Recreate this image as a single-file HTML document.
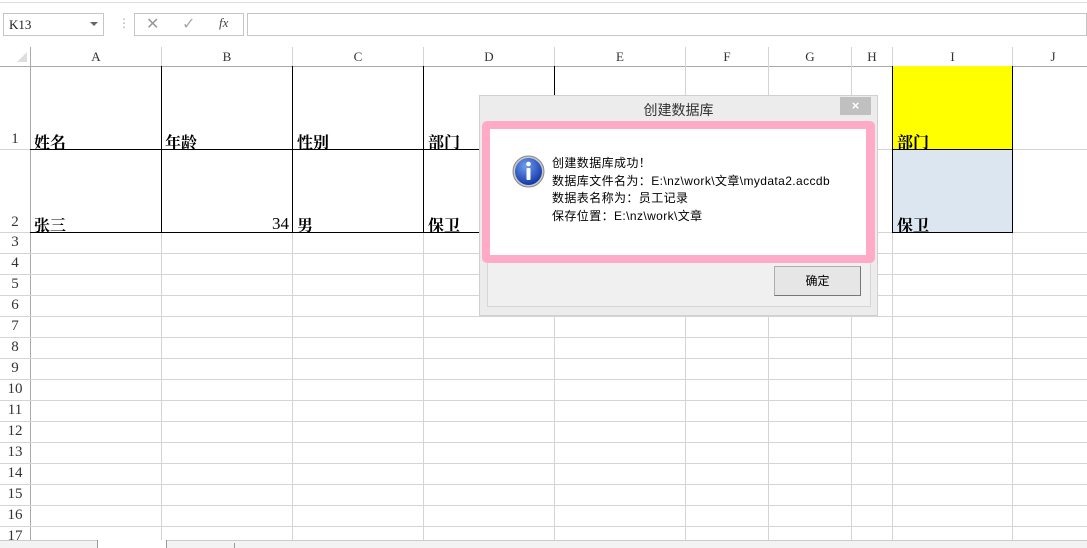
<!DOCTYPE html>
<html><head><meta charset="utf-8"><style>
*{margin:0;padding:0;box-sizing:border-box}
body{width:1087px;height:548px;overflow:hidden;background:#fff;position:relative;font-family:"Liberation Serif","Noto Serif CJK SC",serif}
.a{position:absolute}
.v{position:absolute;top:47px;width:1px;height:493px;background:#d4d4d4}
.h{position:absolute;left:0;width:1087px;height:1px;background:#d4d4d4}
.ch{position:absolute;top:47px;height:19px;font-size:13px;color:#333;text-align:center;line-height:20px}
.rh{position:absolute;left:0;width:30px;font-size:15px;color:#333;text-align:center;font-family:"Liberation Serif",serif}
.cell{position:absolute;font-size:16px;font-weight:bold;color:#000;font-family:"Liberation Serif","Noto Serif CJK SC",serif}
.bk{position:absolute;background:#000}
.dt{font-family:"Liberation Sans","Noto Sans CJK SC",sans-serif;font-size:12px;color:#000}
</style></head><body>
<div class="a" style="left:0;top:0;width:1087px;height:47px;background:#fff"></div>
<div class="a" style="left:0;top:2px;width:1087px;height:1px;background:#e0e0e0"></div>
<div class="a" style="left:3px;top:13px;width:101px;height:23px;border:1px solid #c6c6c6;font-size:13px;line-height:21px;padding-left:5px;color:#222">K13</div>
<div class="a" style="left:90px;top:22px;width:0;height:0;border-left:4px solid transparent;border-right:4px solid transparent;border-top:4px solid #666"></div>
<div class="a" style="left:118px;top:16px;color:#aaa;font-size:12px">⋮</div>
<div class="a" style="left:134px;top:13px;width:110px;height:23px;border:1px solid #c6c6c6"></div>
<div class="a" style="left:146px;top:14px;color:#999;font-size:16px;font-family:'Liberation Sans'">✕</div>
<div class="a" style="left:182px;top:14px;color:#aaa;font-size:16px;font-family:'DejaVu Sans'">✓</div>
<div class="a" style="left:219px;top:15px;color:#444;font-size:13px;font-style:italic">fx</div>
<div class="a" style="left:247px;top:13px;width:840px;height:23px;border:1px solid #c6c6c6"></div>
<div class="a" style="left:0;top:66px;width:1087px;height:1px;background:#aaa"></div>
<div class="a" style="left:30px;top:47px;width:1px;height:493px;background:#aaa"></div>
<div class="a" style="left:17px;top:52px;width:0;height:0;border-left:10px solid transparent;border-bottom:10px solid #ddd"></div>
<div class="v" style="left:161px"></div><div class="v" style="left:292px"></div><div class="v" style="left:423px"></div><div class="v" style="left:554px"></div><div class="v" style="left:685px"></div><div class="v" style="left:768px"></div><div class="v" style="left:851px"></div><div class="v" style="left:892px"></div><div class="v" style="left:1012px"></div>
<div class="ch" style="left:31px;width:130px">A</div><div class="ch" style="left:162px;width:130px">B</div><div class="ch" style="left:293px;width:130px">C</div><div class="ch" style="left:424px;width:130px">D</div><div class="ch" style="left:555px;width:130px">E</div><div class="ch" style="left:686px;width:82px">F</div><div class="ch" style="left:769px;width:82px">G</div><div class="ch" style="left:852px;width:40px">H</div><div class="ch" style="left:893px;width:119px">I</div><div class="ch" style="left:1013px;width:80px">J</div>
<div class="h" style="top:149px"></div><div class="h" style="top:232px"></div>
<div class="h" style="top:253px"></div><div class="h" style="top:274px"></div><div class="h" style="top:295px"></div><div class="h" style="top:316px"></div><div class="h" style="top:337px"></div><div class="h" style="top:358px"></div><div class="h" style="top:379px"></div><div class="h" style="top:400px"></div><div class="h" style="top:421px"></div><div class="h" style="top:442px"></div><div class="h" style="top:463px"></div><div class="h" style="top:484px"></div><div class="h" style="top:505px"></div><div class="h" style="top:526px"></div>
<div class="rh" style="top:131px">1</div><div class="rh" style="top:214px">2</div>
<div class="rh" style="top:234px">3</div><div class="rh" style="top:255px">4</div><div class="rh" style="top:276px">5</div><div class="rh" style="top:297px">6</div><div class="rh" style="top:318px">7</div><div class="rh" style="top:339px">8</div><div class="rh" style="top:360px">9</div><div class="rh" style="top:381px">10</div><div class="rh" style="top:402px">11</div><div class="rh" style="top:423px">12</div><div class="rh" style="top:444px">13</div><div class="rh" style="top:465px">14</div><div class="rh" style="top:486px">15</div><div class="rh" style="top:507px">16</div><div class="rh" style="top:528px">17</div>
<div class="a" style="left:892px;top:66px;width:121px;height:84px;background:#ffff00"></div>
<div class="a" style="left:892px;top:149px;width:121px;height:84px;background:#dce6f1"></div>
<div class="bk" style="left:30px;top:149px;width:524px;height:1px"></div>
<div class="bk" style="left:30px;top:232px;width:524px;height:1px"></div>
<div class="bk" style="left:161px;top:66px;width:1px;height:167px"></div>
<div class="bk" style="left:292px;top:66px;width:1px;height:167px"></div>
<div class="bk" style="left:423px;top:66px;width:1px;height:167px"></div>
<div class="bk" style="left:554px;top:66px;width:1px;height:167px"></div>
<div class="bk" style="left:892px;top:66px;width:1px;height:167px"></div>
<div class="bk" style="left:1012px;top:66px;width:1px;height:167px"></div>
<div class="bk" style="left:892px;top:149px;width:121px;height:1px"></div>
<div class="bk" style="left:892px;top:232px;width:121px;height:1px"></div>
<div class="cell" style="left:34px;top:130px">姓名</div>
<div class="cell" style="left:165px;top:130px">年龄</div>
<div class="cell" style="left:297px;top:130px">性别</div>
<div class="cell" style="left:428px;top:130px">部门</div>
<div class="cell" style="left:34px;top:213px">张三</div>
<div class="cell" style="left:268px;top:214px;font-weight:normal;font-size:17px;width:21px;text-align:right">34</div>
<div class="cell" style="left:297px;top:213px">男</div>
<div class="cell" style="left:428px;top:213px">保卫</div>
<div class="cell" style="left:897px;top:130px">部门</div>
<div class="cell" style="left:897px;top:213px">保卫</div>
<div class="a" style="left:0;top:540px;width:1087px;height:8px;background:#f3f3f3;border-top:1px solid #ccc"></div>
<div class="a" style="left:97px;top:540px;width:70px;height:8px;background:#fff;border-left:1px solid #999;border-right:1px solid #999"></div>
<div class="a" style="left:234px;top:543px;width:1px;height:5px;background:#999"></div>
<div class="a" style="left:479px;top:95px;width:399px;height:221px;background:#ececec;border:1px solid #d0d0d0"></div>
<div class="a dt" style="left:479px;top:100px;width:399px;text-align:center;font-size:14px;color:#333">创建数据库</div>
<div class="a" style="left:840px;top:97px;width:31px;height:18px;background:#c0c0c0;color:#fff;text-align:center;font:bold 13px/18px 'Liberation Sans',sans-serif">×</div>
<div class="a" style="left:487px;top:121px;width:384px;height:186px;border:1px solid #d6d6d6;background:#f0f0f0"></div>
<div class="a" style="left:482px;top:121px;width:393px;height:142px;background:#ffabc7;border-radius:5px"></div>
<div class="a" style="left:490px;top:129px;width:376px;height:126px;background:#fff"></div>
<svg class="a" style="left:512px;top:155px" width="33" height="33" viewBox="0 0 33 33">
<defs><radialGradient id="g" cx="40%" cy="30%" r="70%"><stop offset="0" stop-color="#6f9ff0"/><stop offset="1" stop-color="#1438a8"/></radialGradient></defs>
<circle cx="16.5" cy="16.5" r="15.5" fill="#c8c8c8" stroke="#888"/>
<circle cx="16.5" cy="16.5" r="13.5" fill="url(#g)"/>
<circle cx="16.5" cy="9" r="2.3" fill="#fff"/>
<rect x="14.5" y="13" width="4" height="12" rx="1" fill="#fff"/>
</svg>
<div class="a dt" style="left:552px;top:155px;line-height:17.5px;letter-spacing:0.4px">创建数据库成功！<br>数据库文件名为：E:\nz\work\文章\mydata2.accdb<br>数据表名称为：员工记录<br>保存位置：E:\nz\work\文章</div>
<div class="a dt" style="left:774px;top:266px;width:87px;height:30px;background:#e6e6e6;border:1px solid #adadad;border-right-color:#777;border-bottom-color:#777;text-align:center;line-height:28px">确定</div>
</body></html>
